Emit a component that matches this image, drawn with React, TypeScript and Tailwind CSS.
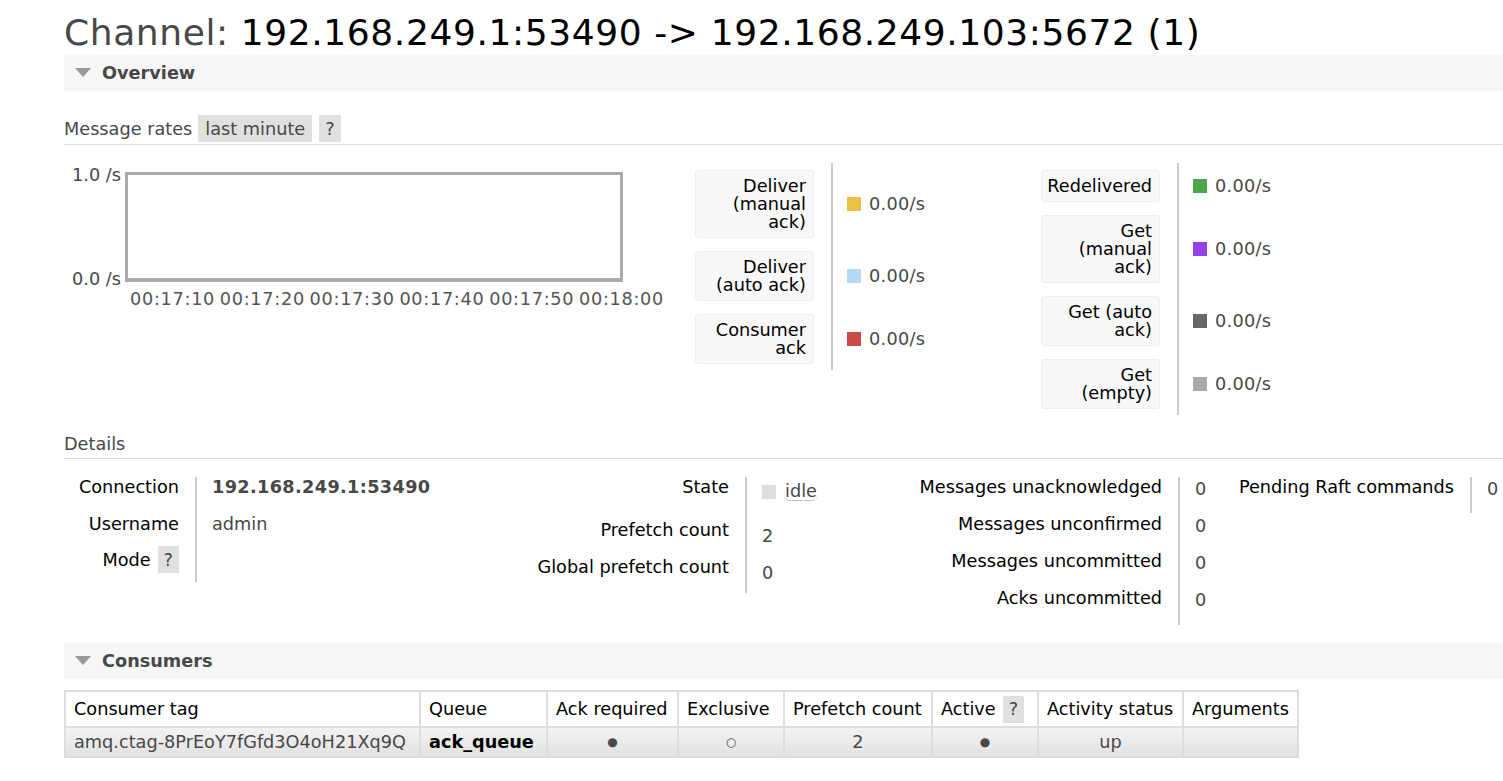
import React from "react";

const Triangle = () => (
  <svg width="16" height="10" viewBox="0 0 16 10" className="mr-[11px]">
    <path d="M0 0 L16 0 L8 9 Z" fill="#9a9a9a" />
  </svg>
);

function SectionHeader({ title }: { title: string }) {
  return (
    <div className="h-[36px] bg-[#f6f6f6] flex items-center pl-[11px]">
      <Triangle />
      <span className="font-bold text-[#484848]">{title}</span>
    </div>
  );
}

const Help = ({ className = "" }: { className?: string }) => (
  <span className={`inline-flex items-center justify-center bg-[#e0e0e0] text-[#484848] h-[27px] px-[6px] ${className}`}>?</span>
);

type Rate = { label: string[]; color: string; h: number };

const rates1: Rate[] = [
  { label: ["Deliver", "(manual", "ack)"], color: "#e8c243", h: 68 },
  { label: ["Deliver", "(auto ack)"], color: "#b2d8f6", h: 50 },
  { label: ["Consumer", "ack"], color: "#cb4b4b", h: 50 },
];

const rates2: Rate[] = [
  { label: ["Redelivered"], color: "#4da74d", h: 32 },
  { label: ["Get", "(manual", "ack)"], color: "#9440ed", h: 68 },
  { label: ["Get (auto", "ack)"], color: "#666666", h: 50 },
  { label: ["Get", "(empty)"], color: "#aaaaaa", h: 50 },
];

function Legend({ rows, width }: { rows: Rate[]; width: string }) {
  return (
    <div className={`flex flex-col ${width}`}>
      {rows.map((r, i) => (
        <div key={i} className="flex">
          <div className="py-[6.5px] pr-[17px]">
            <div
              className="w-[119px] bg-[#f8f8f8] border border-[#eeeeee] rounded-[3px] text-right text-black pr-[7px] flex flex-col justify-center leading-[18px] whitespace-nowrap"
              style={{ height: r.h }}
            >
              {r.label.map((l, j) => (
                <span key={j}>{l}</span>
              ))}
            </div>
          </div>
          <div className="border-l-2 border-[#cccccc] flex items-center pl-[14px] text-[#484848]">
            <span className="w-[14px] h-[14px] mr-[8px]" style={{ background: r.color }} />
            <span className="tracking-[0.3px]">0.00/s</span>
          </div>
        </div>
      ))}
    </div>
  );
}

function DetailTable({
  rows,
  labelW,
  valueW,
}: {
  rows: { label: React.ReactNode; value: React.ReactNode; h: number }[];
  labelW: string;
  valueW: string;
}) {
  return (
    <div className="flex items-start">
      <div className={`flex flex-col ${labelW}`}>
        {rows.map((r, i) => (
          <div key={i} className="text-right text-black pr-[16px] flex justify-end items-start whitespace-nowrap" style={{ height: r.h }}>
            {r.label}
          </div>
        ))}
      </div>
      <div className={`flex flex-col border-l-2 border-[#cccccc] pl-[15px] ${valueW}`}>
        {rows.map((r, i) => (
          <div key={i} className="text-[#484848] flex items-start whitespace-nowrap" style={{ height: r.h }}>
            {r.value}
          </div>
        ))}
      </div>
    </div>
  );
}

export default function App() {
  const ticks = ["00:17:10", "00:17:20", "00:17:30", "00:17:40", "00:17:50", "00:18:00"];
  const th = "border-2 border-[#dddddd] px-[8px] font-normal text-black whitespace-nowrap";
  const td = "border-2 border-[#dddddd] px-[8px] text-[#484848] text-center whitespace-nowrap";

  return (
    <div className="min-h-screen bg-white pl-[64px] font-['DejaVu_Sans',Verdana,sans-serif] text-[17.7px] leading-[18px] overflow-hidden">
      <h1 className="text-[36px] tracking-[0.6px] leading-[40px] pt-[13px] pb-[2px] whitespace-nowrap text-[#484848]">
        Channel: <span className="text-black">192.168.249.1:53490 -&gt; 192.168.249.103:5672 (1)</span>
      </h1>

      <SectionHeader title="Overview" />

      <div className="mt-[24px] flex items-center border-b border-[#dddddd] pb-[2px] text-[#484848]">
        <span className="mr-[6px]">Message rates</span>
        <span className="bg-[#e0e0e0] h-[27px] px-[7px] flex items-center">last minute</span>
        <Help className="ml-[7px]" />
      </div>

      <div className="flex mt-[18px]">
        <div className="w-[631px] pt-[9px]">
          <div className="flex">
            <div className="w-[61px] h-[110px] flex flex-col justify-between items-end pr-[4px] text-[#484848] whitespace-nowrap">
              <span className="-mt-[6px]">1.0 /s</span>
              <span className="-mb-[6px]">0.0 /s</span>
            </div>
            <div className="w-[498px] h-[110px] border-[3px] border-b-[4px] border-[#aaaaaa]" />
          </div>
          <div className="flex pl-[66px] mt-[8px] text-[#545454] whitespace-nowrap">
            {ticks.map((t) => (
              <span key={t} className="w-[89.8px] shrink-0 tracking-[0.7px]">{t}</span>
            ))}
          </div>
        </div>
        <Legend rows={rates1} width="w-[346px]" />
        <Legend rows={rates2} width="w-[300px]" />
      </div>

      <div className="mt-[20px] pb-[5px] border-b border-[#dddddd] text-[#484848]">Details</div>

      <div className="flex items-start mt-[18px]">
        <DetailTable
          labelW="w-[131px]"
          valueW="w-[304px]"
          rows={[
            { label: <span className="pt-px">Connection</span>, value: <b className="pt-px tracking-[0.35px]">192.168.249.1:53490</b>, h: 37 },
            { label: <span className="pt-px">Username</span>, value: <span className="pt-px">admin</span>, h: 37 },
            {
              label: (
                <span className="flex items-center -mt-[5px]">
                  Mode <Help className="ml-[7px]" />
                </span>
              ),
              value: null,
              h: 31,
            },
          ]}
        />
        <DetailTable
          labelW="w-[246px]"
          valueW="w-[152px]"
          rows={[
            { label: <span className="pt-px">State</span>, value: (
              <span className="flex items-center pt-[5px]">
                <span className="w-[14px] h-[14px] bg-[#dddddd] mr-[8px]" />
                <span className="border-b border-dotted border-[#888] rounded-[6px] px-[1px]">idle</span>
              </span>
            ), h: 43 },
            { label: <span className="pt-px">Prefetch count</span>, value: <span className="pt-[7px]">2</span>, h: 37 },
            { label: <span className="pt-px">Global prefetch count</span>, value: <span className="pt-[7px]">0</span>, h: 36 },
          ]}
        />
        <DetailTable
          labelW="w-[281px]"
          valueW="w-[40px]"
          rows={[
            { label: <span className="pt-px">Messages unacknowledged</span>, value: <span className="pt-[3px]">0</span>, h: 37 },
            { label: <span className="pt-px">Messages unconfirmed</span>, value: <span className="pt-[3px]">0</span>, h: 37 },
            { label: <span className="pt-px">Messages uncommitted</span>, value: <span className="pt-[3px]">0</span>, h: 37 },
            { label: <span className="pt-px">Acks uncommitted</span>, value: <span className="pt-[3px]">0</span>, h: 37 },
          ]}
        />
        <DetailTable
          labelW="w-[252px]"
          valueW="w-[40px]"
          rows={[{ label: <span className="pt-px">Pending Raft commands</span>, value: <span className="pt-[3px]">0</span>, h: 36 }]}
        />
      </div>

      <div className="mt-[18px]">
        <SectionHeader title="Consumers" />
      </div>

      <table className="mt-[11px] border-collapse border-2 border-[#d4d4d4]">
        <thead>
          <tr className="h-[36px] bg-white text-left">
            <th className={`${th} w-[355px]`}>Consumer tag</th>
            <th className={`${th} w-[127px]`}>Queue</th>
            <th className={`${th} w-[131px]`}>Ack required</th>
            <th className={`${th} w-[106px]`}>Exclusive</th>
            <th className={`${th} w-[148px]`}>Prefetch count</th>
            <th className={`${th} w-[106px]`}>
              <span className="flex items-center">
                Active <Help className="ml-[7px]" />
              </span>
            </th>
            <th className={`${th} w-[145px]`}>Activity status</th>
            <th className={`${th} w-[115px]`}>Arguments</th>
          </tr>
        </thead>
        <tbody>
          <tr className="h-[30px] bg-gradient-to-b from-[#f3f3f3] to-[#e2e2e2]">
            <td className={`${td} text-left`}>amq.ctag-8PrEoY7fGfd3O4oH21Xq9Q</td>
            <td className={`${td} text-left font-bold text-black`}>ack_queue</td>
            <td className={`${td} text-[12px]`}>●</td>
            <td className={`${td} text-[12px]`}>○</td>
            <td className={td}>2</td>
            <td className={`${td} text-[12px]`}>●</td>
            <td className={td}>up</td>
            <td className={td}></td>
          </tr>
        </tbody>
      </table>
    </div>
  );
}
